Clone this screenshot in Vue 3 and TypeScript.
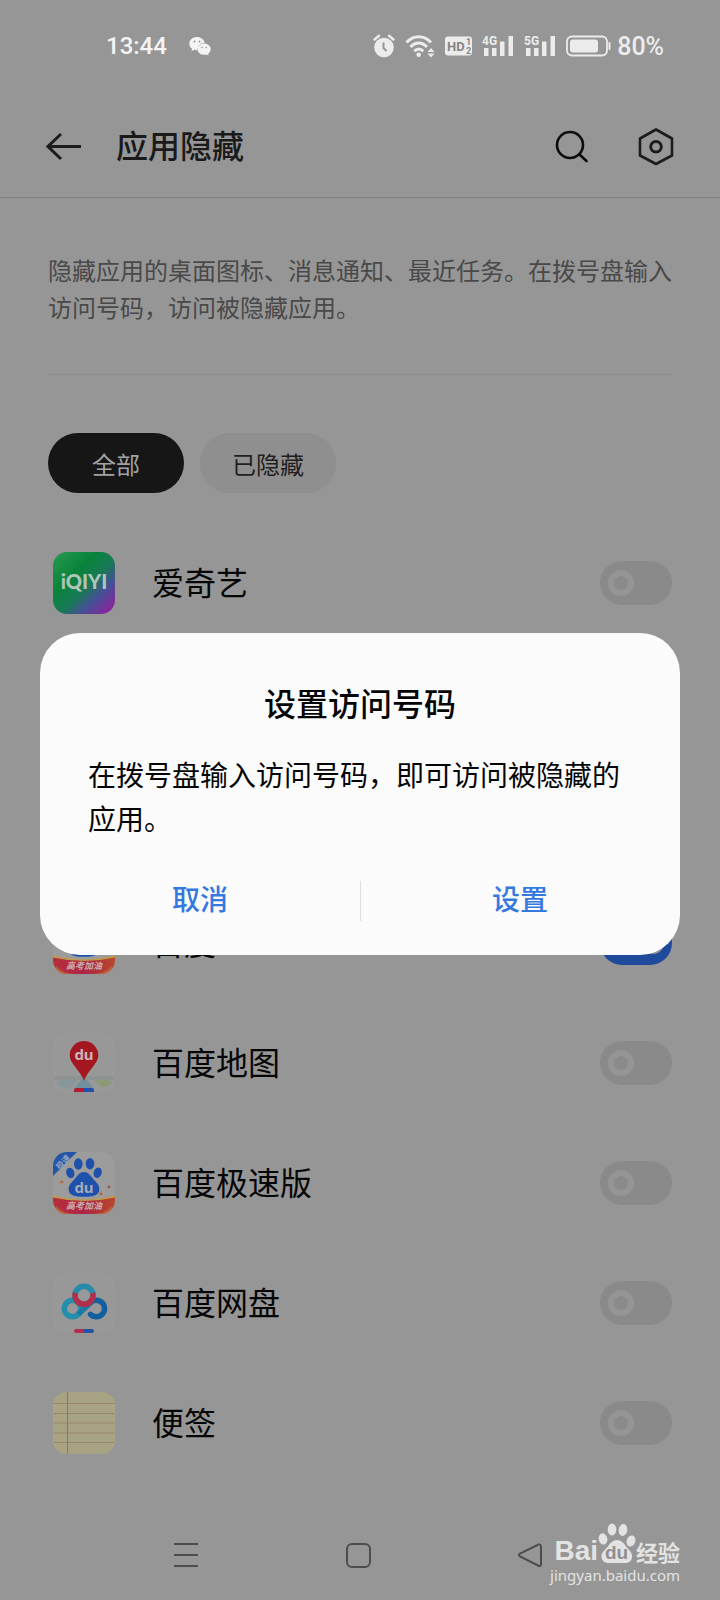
<script setup lang="ts">
import { ref } from 'vue'

interface AppRow {
  id: string
  name: string
  hidden: boolean
  slot?: boolean
}

const filter = ref<'all' | 'hidden'>('all')
const apps = ref<AppRow[]>([
  { id: 'iqiyi', name: '爱奇艺', hidden: false },
  { id: 'baidu', name: '百度', hidden: true, slot: true },
  { id: 'map', name: '百度地图', hidden: false },
  { id: 'lite', name: '百度极速版', hidden: false },
  { id: 'disk', name: '百度网盘', hidden: false },
  { id: 'notes', name: '便签', hidden: false },
])
</script>

<template>
  <div class="screen">
    <div class="status">
      <div class="status-group">
        <span class="clock">13:44</span>
        <svg class="wechat" width="22" height="20" viewBox="0 0 22 20">
          <path fill="#f4f4f4" d="M8 1C3.600 1 .3 3.900.3 7.700c0 2.100 1.100 3.900 2.800 5.100l-.7 2.400 2.800-1.400c.9.3 1.800.4 2.800.4h.5c-.2-4.300 3.300-7.300 7.200-7.400C15 3.500 11.800 1 8 1z" />
          <path fill="#f4f4f4" d="M15.200 7.600c-3.700 0-6.600 2.500-6.600 5.600s2.900 5.600 6.600 5.600c.8 0 1.500-.1 2.200-.3l2.200 1.100-.5-1.900c1.500-1 2.600-2.700 2.600-4.500 0-3.100-2.900-5.600-6.500-5.600z" />
          <g fill="#969696"><circle cx="5.500" cy="5.500" r="1" /><circle cx="10.500" cy="5.500" r="1" /><circle cx="13" cy="11.500" r=".8" /><circle cx="17.300" cy="11.500" r=".8" /></g>
        </svg>
      </div>
      <div class="status-group status-right">
        <svg width="22" height="24" viewBox="0 0 22 24">
          <circle cx="11" cy="13.500" r="9.800" fill="#ececec" />
          <path d="M1.500 5.500 6 1.800M20.500 5.500 16 1.800" stroke="#ececec" stroke-width="2.400" stroke-linecap="round" />
          <path d="M10.500 8.500v5.500l3 3" fill="none" stroke="#969696" stroke-width="2" />
        </svg>
        <svg width="30" height="24" viewBox="0 0 30 24">
          <g fill="none" stroke="#ececec" stroke-width="3">
            <path d="M1.500 8.500c7-7.600 17.500-7.600 24.500 0" />
            <path d="M5.500 13c5-5.300 11.500-5.300 16.500 0" />
            <path d="M9.300 17.200c3-2.900 6-2.900 9 0" />
          </g>
          <circle cx="13.700" cy="20.700" r="2.300" fill="#ececec" />
          <path d="m26 14 3.500 4h-7zM26 23.500l3.500-4h-7z" fill="#ececec" />
        </svg>
        <svg width="27" height="24" viewBox="0 0 27 24">
          <rect y="2.500" width="27" height="19" rx="3" fill="#ececec" />
          <text x="2" y="17" class="hd">HD</text>
          <text x="21" y="11" class="hd-small">1</text>
          <text x="21" y="20" class="hd-small">2</text>
        </svg>
        <svg v-for="net in ['4G', '5G']" :key="net" width="32" height="24" viewBox="0 0 32 24">
          <path d="M2 14h4.500v8H2zM10 14h4.500v8H10zM18 7.500h4.500V22H18zM26.500 2H31v20h-4.500z" fill="#ececec" />
          <text x="0" y="11" class="net">{{ net }}</text>
        </svg>
        <span class="battery">
          <svg width="45" height="24" viewBox="0 0 45 24">
            <rect x="1" y="2.500" width="40" height="19" rx="5" fill="none" stroke="#ececec" stroke-width="1.800" />
            <rect x="4" y="5.500" width="28" height="13" rx="3" fill="#ececec" />
            <path d="M43.500 9v6" stroke="#ececec" stroke-width="2" stroke-linecap="round" />
          </svg>
          <span class="percent">80%</span>
        </span>
      </div>
    </div>

    <header class="header">
      <button class="icon-button" aria-label="返回">
        <svg width="36" height="40" viewBox="0 0 36 40" fill="none" stroke="#1d1d1d" stroke-width="3">
          <path d="M35 19.500H2M15 7 2 19.500 15 32" />
        </svg>
      </button>
      <h1>应用隐藏</h1>
      <button class="icon-button" aria-label="搜索">
        <svg width="36" height="40" viewBox="0 0 36 40" fill="none" stroke="#0c0c0c" stroke-width="2.600">
          <circle cx="16" cy="18" r="13" />
          <path d="m25.500 27.500 7 6.500" stroke-linecap="round" />
        </svg>
      </button>
      <button class="icon-button" aria-label="设置">
        <svg width="36" height="40" viewBox="0 0 36 40" fill="none" stroke="#1c1c1c" stroke-width="2.600" stroke-linejoin="round">
          <path d="m18 2.500 16 9v17l-16 8.500-16-8.500v-17z" />
          <circle cx="18" cy="19.700" r="5.300" stroke-width="3" />
        </svg>
      </button>
    </header>

    <main>
      <p class="intro">隐藏应用的桌面图标、消息通知、最近任务。在拨号盘输入访问号码，访问被隐藏应用。</p>
      <div class="chips">
        <button class="chip" :class="{ active: filter === 'all' }" @click="filter = 'all'">全部</button>
        <button class="chip" :class="{ active: filter === 'hidden' }" @click="filter = 'hidden'">已隐藏</button>
      </div>

      <ul class="apps">
        <li v-for="app in apps" :key="app.id" class="app" :class="{ spaced: app.slot }">
          <svg class="app-icon" width="62" height="62" viewBox="0 0 62 62">
            <template v-if="app.id === 'iqiyi'">
              <defs>
                <linearGradient id="iq" x1="0" y1="0" x2="1" y2="1">
                  <stop offset="0" stop-color="#289a50" />
                  <stop offset=".35" stop-color="#09833b" />
                  <stop offset=".55" stop-color="#187a55" />
                  <stop offset=".72" stop-color="#454f96" />
                  <stop offset=".95" stop-color="#8d229c" />
                </linearGradient>
              </defs>
              <rect width="62" height="62" rx="14" fill="url(#iq)" />
              <text x="31" y="37" class="iqiyi">iQIYI</text>
            </template>
            <template v-else-if="app.id === 'baidu' || app.id === 'lite'">
              <defs>
                <linearGradient :id="'band-' + app.id">
                  <stop offset="0" stop-color="#b5303a" />
                  <stop offset=".5" stop-color="#ae2544" />
                  <stop offset="1" stop-color="#b9472f" />
                </linearGradient>
                <clipPath :id="'clip-' + app.id"><rect width="62" height="62" rx="14" /></clipPath>
              </defs>
              <g :clip-path="`url(#clip-${app.id})`">
                <rect width="62" height="62" fill="#9c9c9c" />
                <path v-if="app.id === 'lite'" d="M0 0h24L0 24z" fill="#2356a9" />
                <text v-if="app.id === 'lite'" x="9.500" y="13" class="corner" transform="rotate(-45 9.500 9.500)">极速</text>
                <g fill="#1f50ac">
                  <ellipse cx="25.300" cy="12" rx="4.300" ry="5.700" />
                  <ellipse cx="37" cy="11.700" rx="4.300" ry="5.700" />
                  <ellipse cx="17.300" cy="21" rx="4" ry="5.300" transform="rotate(-18 17.300 21)" />
                  <ellipse cx="44.700" cy="20.800" rx="4" ry="5.300" transform="rotate(18 44.700 20.800)" />
                  <path d="M31 20c5 0 6.500 4 9.500 7.300 3.200 3.400 6.500 6 5.800 11-.7 4.700-5 6.500-15.300 6.500S16.400 43 15.700 38.300c-.7-5 2.600-7.600 5.800-11C24.500 24 26 20 31 20z" />
                </g>
                <text v-if="app.id === 'lite'" x="31" y="41" class="du pale">du</text>
                <path d="m6 31 3-3 2 3zM46 43l2-4 2 4z" fill="#b76a3b" />
                <circle cx="56" cy="35" r="1.400" fill="#a94f52" />
                <path d="M0 43.500q31 8 62 0V62H0z" fill="#c29a42" />
                <path d="M0 45.500q31 7 62 0V62H0z" :fill="`url(#band-${app.id})`" />
                <path d="M3 54q6 7 18 8H0zM59 54q-6 7-18 8h21z" fill="#bf713b" opacity=".7" />
                <text x="31" y="57" class="cheer">高考加油</text>
              </g>
            </template>
            <template v-else-if="app.id === 'map'">
              <rect width="62" height="62" rx="14" fill="#989898" />
              <path d="M2 44h58l1 4H1z" fill="#8f9293" />
              <path d="M7 48h17L16 57q-7 0-12-6z" fill="#88979c" />
              <path d="M42 48h13q4 2 4 4l-8 3q-5 0-9-7z" fill="#8a9a76" />
              <path d="M29 47h4l8 10H21z" fill="#70909f" />
              <path d="M31 56h8q2 0 2 2v2H31z" fill="#244faa" />
              <path d="M31 56h-8q-2 0-2 2v2h10z" fill="#b31b30" />
              <path d="M31 9a14.300 14.300 0 0 0-14.300 14.300c0 8 10 15 14.300 25.200 4.300-10.200 14.300-17.200 14.300-25.200A14.300 14.300 0 0 0 31 9z" fill="#a51720" />
              <text x="31" y="28" class="du">du</text>
            </template>
            <template v-else-if="app.id === 'disk'">
              <defs>
                <linearGradient id="disk-l"><stop offset="0" stop-color="#258eaa" /><stop offset="1" stop-color="#125f9f" /></linearGradient>
              </defs>
              <rect width="62" height="62" rx="14" fill="#989898" />
              <g fill="none" stroke-width="5.500">
                <path d="M37.500 42.300a8.200 8.200 0 1 0 .3-11.800" stroke="#125f9f" stroke-linecap="round" />
                <circle cx="19.500" cy="36.500" r="8.200" stroke="#258eaa" />
                <path d="M25.300 42.300 38 30.300" stroke="#1b79a6" />
                <circle cx="31" cy="23.300" r="9" stroke="#258aa8" />
                <path d="M22.300 21a9 9 0 1 0 17.400 0" stroke="#b12f4b" />
              </g>
              <path d="M31 57h-8q-2 0-2 2t2 2h8z" fill="#b42d4b" />
              <path d="M31 57h8q2 0 2 2t-2 2h-8z" fill="#2254a5" />
            </template>
            <template v-else>
              <rect width="62" height="62" rx="13" fill="#a8a382" />
              <path d="M1 11.500h60M1 21.500h60M1 31h60M1 41h60M1 50.500h60" stroke="#98866a" />
              <path d="M14.500 0v62" stroke="#90735b" />
            </template>
          </svg>
          <label class="app-name" :for="'switch-' + app.id">{{ app.name }}</label>
          <input :id="'switch-' + app.id" v-model="app.hidden" class="switch" type="checkbox" />
        </li>
      </ul>
    </main>

    <nav class="nav">
      <button aria-label="最近任务">
        <svg width="28" height="28" viewBox="0 0 28 28"><path d="M2 3h24M2 14h24M2 25h24" stroke="#4d4d4d" stroke-width="2" /></svg>
      </button>
      <button aria-label="主页">
        <svg width="28" height="28" viewBox="0 0 28 28"><rect x="3" y="3" width="23" height="23" rx="5" fill="none" stroke="#4d4d4d" stroke-width="2" /></svg>
      </button>
      <button aria-label="后退">
        <svg width="28" height="28" viewBox="0 0 28 28"><path d="M22.500 3.500Q25 3 25 6v17q0 3-3 1.500L4 15.500Q2 14 4 12.500z" fill="none" stroke="#4d4d4d" stroke-width="2" /></svg>
      </button>
    </nav>

    <div class="watermark">
      <div class="brand">
        <span class="bai">Bai</span>
        <svg width="38" height="42" viewBox="0 0 38 42">
          <g fill="#e3e3e3">
            <ellipse cx="14" cy="7.500" rx="4.300" ry="6" />
            <ellipse cx="25" cy="8" rx="4.300" ry="6" transform="rotate(8 25 8)" />
            <ellipse cx="5" cy="17" rx="4.300" ry="5.700" transform="rotate(-12 5 17)" />
            <ellipse cx="33" cy="19" rx="4.300" ry="5.700" transform="rotate(18 33 19)" />
            <path d="M19 18c5 0 7 4 10 7.500s5.500 5.500 5 9.500c-.5 4.500-3.500 6-6.500 6h-17c-3 0-6.500-1.500-7-6-.4-4 2.500-6 5.500-9.500S14 18 19 18z" />
          </g>
          <text x="18.500" y="37" class="paw-du">du</text>
        </svg>
        <span class="exp">经验</span>
      </div>
      <span class="site">jingyan.baidu.com</span>
    </div>

    <div class="overlay">
      <section class="dialog" role="dialog" aria-modal="true" aria-labelledby="dialog-title">
        <h2 id="dialog-title">设置访问号码</h2>
        <p>在拨号盘输入访问号码，即可访问被隐藏的应用。</p>
        <div class="actions">
          <button>取消</button>
          <button>设置</button>
        </div>
      </section>
    </div>
  </div>
</template>

<style>
html,
body {
  background: #969696;
}
</style>

<style scoped>
*,
*::before {
  box-sizing: border-box;
}
.screen {
  position: relative;
  min-height: 100vh;
  overflow: hidden;
  background: #969696;
  color: #060606;
  font-family: Roboto, "Noto Sans CJK SC", sans-serif;
}
button {
  border: 0;
  padding: 0;
  background: none;
  color: inherit;
  font: inherit;
  cursor: pointer;
}
svg {
  display: block;
  flex: none;
}
.status {
  display: flex;
  justify-content: space-between;
  align-items: center;
  height: 92px;
  padding: 0 56px 0 106px;
  color: #f4f4f4;
  font-size: 24px;
  font-weight: 500;
}
.status-group {
  display: flex;
  align-items: center;
  gap: 22px;
}
.status-right {
  gap: 10px;
  color: #ececec;
}
.battery {
  display: flex;
  align-items: center;
  gap: 6px;
}
.percent {
  font-size: 25px;
}
.hd {
  font: 700 13px Roboto, sans-serif;
  fill: #858585;
}
.hd-small {
  font: 700 9px Roboto, sans-serif;
  fill: #858585;
}
.net {
  font: 700 12px Roboto, sans-serif;
  fill: #ececec;
  stroke: #969696;
  stroke-width: 2px;
  paint-order: stroke;
}
.header {
  display: flex;
  align-items: center;
  height: 106px;
  padding: 4px 46px 0;
  border-bottom: 1px solid #7e7e7e;
}
.header h1 {
  flex: 1;
  margin: 0 0 0 34px;
  color: #1a1a1a;
  font-size: 32px;
  font-weight: 500;
  line-height: 48px;
}
.icon-button {
  width: 36px;
  height: 40px;
}
.icon-button + .icon-button {
  margin-left: 48px;
}
main {
  padding: 0 48px;
}
.intro {
  margin: 0;
  padding: 56px 0 46px;
  border-bottom: 1px solid #8b8b8b;
  color: #494949;
  font-size: 24px;
  line-height: 37px;
}
.chips {
  display: flex;
  gap: 16px;
  padding: 58px 0 30px;
}
.chip {
  width: 136px;
  height: 60px;
  border-radius: 30px;
  background: #8f8f8f;
  color: #1f1f1f;
  font-size: 24px;
}
.chip.active {
  background: #161616;
  color: #a3a3a3;
}
.apps {
  margin: 0;
  padding: 0;
  list-style: none;
}
.app {
  display: flex;
  align-items: center;
  height: 120px;
  padding-left: 5px;
}
.spaced {
  margin-top: 240px;
}
.app-name {
  flex: 1;
  margin-left: 37px;
  padding-top: 2px;
  font-size: 32px;
  line-height: 48px;
}
.switch {
  appearance: none;
  display: flex;
  align-items: center;
  width: 72px;
  height: 44px;
  margin: 0;
  padding: 0 8px;
  border-radius: 22px;
  background: #8a8a8a;
}
.switch::before {
  content: "";
  width: 26px;
  height: 26px;
  border: 6px solid #959595;
  border-radius: 50%;
}
.switch:checked {
  justify-content: flex-end;
  background: #1f4a9c;
}
.switch:checked::before {
  width: 22px;
  height: 22px;
}
.iqiyi {
  font: 900 20px Lato, sans-serif;
  fill: #b1c5b7;
  text-anchor: middle;
}
.du {
  font: 700 15px "Noto Sans", sans-serif;
  fill: #c7b9b9;
  text-anchor: middle;
}
.du.pale {
  fill: #a5abb5;
}
.cheer {
  font: italic 700 9px "Noto Sans CJK SC", sans-serif;
  fill: #c9afb0;
  text-anchor: middle;
}
.corner {
  font: 700 8px "Noto Sans CJK SC", sans-serif;
  fill: #93a5bd;
  text-anchor: middle;
}
.nav {
  display: flex;
  padding: 42px 104px 15px 100px;
}
.nav button {
  display: flex;
  flex: 1;
  align-items: center;
  justify-content: center;
  height: 60px;
}
.watermark {
  position: absolute;
  right: 40px;
  bottom: 14px;
  display: flex;
  flex-direction: column;
  align-items: flex-end;
  color: #e3e3e3;
}
.brand {
  display: flex;
  align-items: flex-end;
}
.bai {
  font: 700 28px/26px "Liberation Sans", sans-serif;
}
.exp {
  font: 700 22px/26px "Noto Sans CJK SC", sans-serif;
}
.paw-du {
  font: 700 19px "Liberation Sans", sans-serif;
  fill: #8f8f8f;
  text-anchor: middle;
}
.site {
  font: 15px/22px "Noto Sans", sans-serif;
}
.overlay {
  position: absolute;
  inset: 0;
  display: flex;
  align-items: center;
  justify-content: center;
  padding: 0 40px 12px;
}
.dialog {
  width: 100%;
  padding: 48px 48px 24px;
  border-radius: 40px;
  background: #fbfbfb;
  color: #050505;
}
.dialog h2 {
  margin: 0;
  font-size: 32px;
  font-weight: 500;
  line-height: 48px;
  text-align: center;
}
.dialog p {
  margin: 26px 0 0;
  font-size: 28px;
  line-height: 44px;
}
.actions {
  display: flex;
  margin: 28px -48px 0;
}
.actions button {
  flex: 1;
  height: 60px;
  color: #3478e0;
  font-size: 28px;
  font-weight: 500;
  line-height: 40px;
}
.actions button + button {
  background: linear-gradient(#dedede, #dedede) left center / 1px 40px no-repeat;
}
</style>
